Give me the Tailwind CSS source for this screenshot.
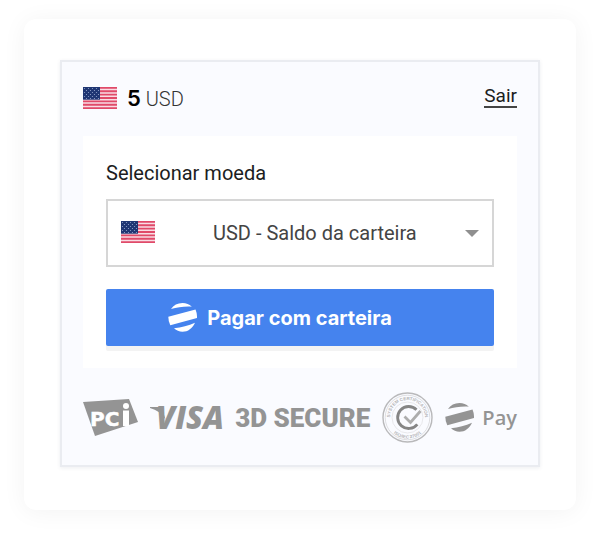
<!DOCTYPE html>
<html lang="pt">
<head>
<meta charset="utf-8">
<meta name="viewport" content="width=device-width, initial-scale=1">
<title>Pagar com carteira</title>
<script src="https://cdn.jsdelivr.net/npm/@tailwindcss/browser@4"></script>
</head>
<body class="min-h-screen bg-white px-6 pt-[19px] pb-7 font-['Roboto','Liberation_Sans',sans-serif] text-[#1c1d21]">
<svg class="absolute size-0" aria-hidden="true">
  <defs>
    <pattern id="stars" width="4" height="4" patternUnits="userSpaceOnUse">
      <circle cx="1.5" cy="1.5" r=".6" fill="#8fa1c9"/><circle cx="3.5" cy="3.5" r=".6" fill="#8fa1c9"/>
    </pattern>
    <symbol id="flag" viewBox="0 0 34 22" preserveAspectRatio="none">
      <path fill="#f9dde4" d="M0 0h34v22H0z"/>
      <path stroke="#e04a69" stroke-width="1.8" d="M0 .85h34M0 4.23h34M0 7.61h34M0 11h34M0 14.38h34M0 17.76h34M0 21.15h34"/>
      <path fill="#1f3673" d="M0 0h17v12.700H0z"/>
      <path fill="url(#stars)" d="M0 .5h16.500v12H0z"/>
    </symbol>
    <symbol id="globe" viewBox="0 0 29 29">
      <path d="M3 6C5.500 2 9.500 0 14.500 0c3.800 0 6.800 1.300 9.300 3.700C16 3.300 9.500 4.300 3 6z"/>
      <path d="M.3 13.800 27.500 6.500Q29.200 10.500 29 15L2.300 22.300Q.3 18.500.3 13.800z"/>
      <path d="M6 25.200C13.500 24.600 20.500 22.600 27 19.700 24.500 25.300 20 28.700 14.500 28.700c-3.300 0-6-1.200-8.500-3.500z"/>
    </symbol>
  </defs>
</svg>
<main class="rounded-xl bg-white px-9 pt-[41px] pb-[43px] shadow-[0_2px_24px_rgba(0,0,0,0.05)]">
  <section class="border-2 border-[#eaecf1] bg-[#fafbff] px-[21px] pt-5 pb-[22px] shadow-[0_1px_4px_rgba(30,40,80,0.08)]">
    <header class="flex h-[54px] items-start justify-between">
      <div class="flex h-8 items-center">
        <svg class="h-[22px] w-[34px]" role="img" aria-label="Estados Unidos"><use href="#flag"/></svg>
        <p class="ml-[10px] text-[20px] leading-7 font-light text-[#333]"><strong class="font-['Inter','Liberation_Sans',sans-serif] text-[22px] font-semibold text-black">5</strong> USD</p>
      </div>
      <a href="#" class="mt-1 border-b-2 border-[#444] text-[19px] leading-5">Sair</a>
    </header>
    <form class="bg-white px-[23px] pt-[23px] pb-[22px]">
      <label for="moeda" class="block text-[20px] leading-7">Selecionar moeda</label>
      <div class="relative mt-3">
        <select id="moeda" class="h-[68px] w-full appearance-none border-2 border-[#d6d6d6] bg-white pr-12 pl-[105px] text-[20px] text-[#444]">
          <option>USD - Saldo da carteira</option>
        </select>
        <svg class="pointer-events-none absolute top-[22px] left-[15px] h-[22px] w-[34px]" aria-hidden="true"><use href="#flag"/></svg>
        <svg class="pointer-events-none absolute top-[31px] right-[15px] h-[7px] w-[14px]" viewBox="0 0 14 7" fill="#8f8f8f" aria-hidden="true"><path d="M0 0h14L7 7z"/></svg>
      </div>
      <button type="button" class="mt-[22px] flex h-[57px] w-full items-center justify-center gap-[10px] rounded-[2px] bg-[#4583ee] pr-10 font-['Inter','Liberation_Sans',sans-serif] text-[20px] font-bold text-white shadow-[0_5px_0_#f3f3f3]">
        <svg class="size-[29px] fill-current" aria-hidden="true"><use href="#globe"/></svg>
        Pagar com carteira
      </button>
    </form>
    <footer class="mt-6 flex h-[51px] items-center justify-between text-[#949494]">
      <svg class="h-[38px] w-[55px]" viewBox="0 0 55 38" role="img" aria-label="PCI">
        <path fill="currentColor" d="M0 3 46 0l9 23-43 14z"/>
        <text x="7" y="27" fill="#fff" stroke="#fff" stroke-width=".5" font-family="DejaVu Sans, sans-serif" font-weight="700" font-size="20">PC</text>
        <path fill="#fff" d="M40 11.500h6V27h-6z"/><circle cx="43" cy="7" r="3" fill="#fff"/>
      </svg>
      <svg class="h-6 w-[73px] overflow-visible" viewBox="0 0 73 24" role="img" aria-label="VISA">
        <path fill="currentColor" d="M0 1h11.500l4 12.500Q10 4.500 0 2z"/>
        <text x="6" y="23" fill="currentColor" font-family="Open Sans, sans-serif" font-weight="800" font-style="italic" font-size="31">VISA</text>
      </svg>
      <span class="text-[26px] leading-8 font-black whitespace-nowrap">3D SECURE</span>
      <svg class="size-[51px]" viewBox="0 0 51 51" fill="none" role="img" aria-label="ISO/IEC 27001">
        <circle cx="25.500" cy="25.500" r="24.500" stroke="#b9b9bb" stroke-width="1.400"/>
        <circle cx="25.500" cy="25.500" r="22.300" stroke="#d7d7d9" stroke-width=".8"/>
        <circle cx="25.500" cy="25.500" r="15.500" stroke="#e2e2e4" stroke-width=".8"/>
        <path id="arc-top" d="M8 25.500a17.500 17.500 0 0 1 35 0"/>
        <path id="arc-bottom" d="M4.500 25.500a21 21 0 0 0 42 0"/>
        <g fill="#b4b4b6" font-family="Liberation Sans, sans-serif" font-size="4.500" font-weight="700" text-anchor="middle">
          <text><textPath href="#arc-top" startOffset="50%">SYSTEM CERTIFICATION</textPath></text>
          <text><textPath href="#arc-bottom" startOffset="50%">ISO/IEC 27001</textPath></text>
        </g>
        <path stroke="#858585" stroke-width="2.800" d="M34.500 17.800a11 11 0 1 0 .8 14.500"/>
        <path stroke="#adadad" stroke-width="2.800" d="m22.500 24.500 6 6L38.500 19"/>
      </svg>
      <div class="flex items-center gap-2">
        <svg class="size-[29px] fill-current" aria-hidden="true"><use href="#globe"/></svg>
        <span class="font-['Open_Sans',sans-serif] text-[20px] font-semibold">Pay</span>
      </div>
    </footer>
  </section>
</main>
</body>
</html>
